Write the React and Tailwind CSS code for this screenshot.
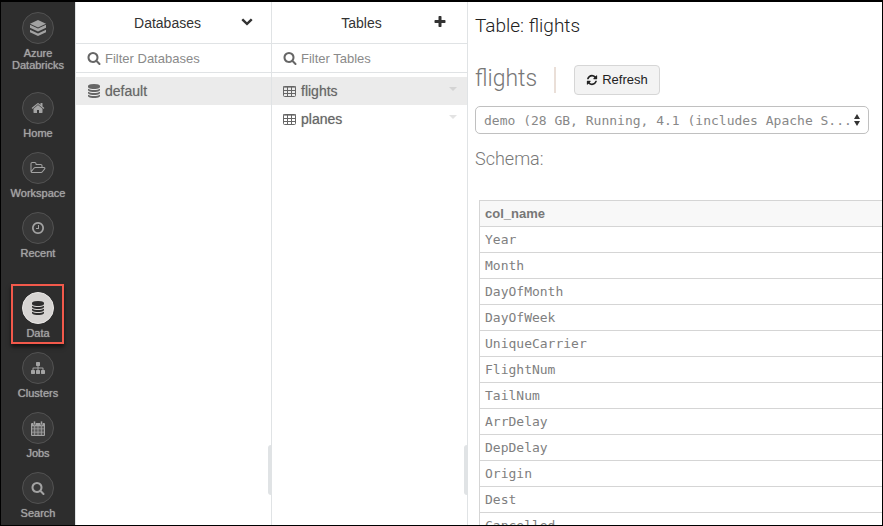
import React from "react";

const PATHS = {
  search:
    "M1216 832q0-185-131.5-316.5t-316.5-131.5-316.5 131.5-131.5 316.5 131.5 316.5 316.5 131.5 316.5-131.5 131.5-316.5zm512 832q0 52-38 90t-90 38q-54 0-90-38l-343-342q-179 124-399 124-143 0-273.5-55.5t-225-150-150-225-55.5-273.5 55.5-273.5 150-225 225-150 273.5-55.5 273.5 55.5 225 150 150 225 55.5 273.5q0 220-124 399l343 343q37 37 37 90z",
  home: "M1472 992v480q0 26-19 45t-45 19h-384v-384h-256v384h-384q-26 0-45-19t-19-45v-480q0-1 .5-3t.5-3l575-474 575 474q1 2 1 6zm223-69l-62 74q-8 9-21 11h-3q-13 0-21-7l-692-577-692 577q-12 8-24 7-13-2-21-11l-62-74q-8-10-7-23.5t11-21.5l719-599q32-26 76-26t76 26l244 204v-195q0-14 9-23t23-9h192q14 0 23 9t9 23v408l219 182q10 8 11 21.5t-7 23.5z",
  plus: "M1600 736v192q0 40-28 68t-68 28h-416v416q0 40-28 68t-68 28h-192q-40 0-68-28t-28-68v-416h-416q-40 0-68-28t-28-68v-192q0-40 28-68t68-28h416v-416q0-40 28-68t68-28h192q40 0 68 28t28 68v416h416q40 0 68 28t28 68z",
  refresh:
    "M1639 1056q0 5-1 7-64 268-268 434.5t-478 166.5q-146 0-282.5-55t-243.5-157l-129 129q-19 19-45 19t-45-19-19-45v-448q0-26 19-45t45-19h448q26 0 45 19t19 45-19 45l-137 137q71 66 161 102t187 36q134 0 250-65t186-179q11-17 53-117 8-23 30-23h192q13 0 22.5 9.5t9.5 22.5zm25-800v448q0 26-19 45t-45 19h-448q-26 0-45-19t-19-45 19-45l138-138q-148-137-349-137-134 0-250 65t-186 179q-11 17-53 117-8 23-30 23h-199q-13 0-22.5-9.5t-9.5-22.5v-7q65-268 270-434.5t480-166.5q146 0 284 55.5t245 156.5l130-129q19-19 45-19t45 19 19 45z",
  sitemap:
    "M1792 1248v320q0 40-28 68t-68 28h-320q-40 0-68-28t-28-68v-320q0-40 28-68t68-28h96v-192h-512v192h96q40 0 68 28t28 68v320q0 40-28 68t-68 28h-320q-40 0-68-28t-28-68v-320q0-40 28-68t68-28h96v-192h-512v192h96q40 0 68 28t28 68v320q0 40-28 68t-68 28h-320q-40 0-68-28t-28-68v-320q0-40 28-68t68-28h96v-192q0-52 38-90t90-38h512v-192h-96q-40 0-68-28t-28-68v-320q0-40 28-68t68-28h320q40 0 68 28t28 68v320q0 40-28 68t-68 28h-96v192h512q52 0 90 38t38 90v192h96q40 0 68 28t28 68z",
  clock:
    "M1024 544v448q0 14-9 23t-23 9h-320q-14 0-23-9t-9-23v-64q0-14 9-23t23-9h224v-352q0-14 9-23t23-9h64q14 0 23 9t9 23zm416 352q0-148-73-273t-198-198-273-73-273 73-198 198-73 273 73 273 198 198 273 73 273-73 198-198 73-273zm224 0q0 209-103 385.5t-279.5 279.5-385.5 103-385.5-103-279.5-279.5-103-385.5 103-385.5 279.5-279.5 385.5-103 385.5 103 279.5 279.5 103 385.5z",
  database:
    "M896 768q237 0 443-43t325-127v170q0 69-103 128t-280 93.5-385 34.5-385-34.5-280-93.5-103-128v-170q119 84 325 127t443 43zm0 768q237 0 443-43t325-127v170q0 69-103 128t-280 93.5-385 34.5-385-34.5-280-93.5-103-128v-170q119 84 325 127t443 43zm0-384q237 0 443-43t325-127v170q0 69-103 128t-280 93.5-385 34.5-385-34.5-280-93.5-103-128v-170q119 84 325 127t443 43zm0-1152q208 0 385 34.5t280 93.5 103 128v128q0 69-103 128t-280 93.5-385 34.5-385-34.5-280-93.5-103-128v-128q0-69 103-128t280-93.5 385-34.5z",
  folder:
    "M1845 931q0-35-53-35h-1088q-40 0-85.5 21.5t-71.5 52.5l-294 363q-18 24-18 40 0 35 53 35h1088q40 0 86-22t71-53l294-363q18-22 18-39zm-1141-163h768v-160q0-40-28-68t-68-28h-576q-40 0-68-28t-28-68v-64q0-40-28-68t-68-28h-320q-40 0-68 28t-28 68v853l256-315q44-53 116-87.5t140-34.5zm1269 163q0 62-46 120l-295 363q-43 53-116 87.5t-140 34.5h-1088q-92 0-158-66t-66-158v-960q0-92 66-158t158-66h320q92 0 158 66t66 158v32h544q92 0 158 66t66 158v160h192q54 0 99 24.5t67 70.5q15 32 15 68z",
  chevron:
    "M1683 808l-742 741q-19 19-45 19t-45-19l-742-741q-19-19-19-45.5t19-45.5l166-165q19-19 45-19t45 19l531 531 531-531q19-19 45-19t45 19l166 165q19 19 19 45.5t-19 45.5z",
};

function Icon({ name, className, viewBox = "0 0 1792 1792" }) {
  return (
    <svg viewBox={viewBox} className={className} fill="currentColor" aria-hidden="true">
      <path d={PATHS[name]} />
    </svg>
  );
}

function LogoIcon() {
  return (
    <svg viewBox="0 0 18 18" className="size-[18px]" fill="currentColor" aria-hidden="true">
      <path d="M9 1 17 4.800 9 8.600 1 4.800z" />
      <path d="M1 5.800 9 9.600 17 5.800V8.800L9 12.600 1 8.800z" />
      <path d="M1 10.800 9 14.600 17 10.800V13.200L9 17 1 13.200z" />
    </svg>
  );
}

function CalendarIcon() {
  return (
    <svg viewBox="0 0 14 15" className="h-[15px] w-[14px]" aria-hidden="true">
      <path fill="currentColor" d="M1 2h12a1 1 0 0 1 1 1v11a1 1 0 0 1-1 1H1a1 1 0 0 1-1-1V3a1 1 0 0 1 1-1z" />
      <rect x="2.5" y="0" width="2" height="4" rx="1" fill="currentColor" stroke="#383838" strokeWidth=".5" />
      <rect x="9.500" y="0" width="2" height="4" rx="1" fill="currentColor" stroke="#383838" strokeWidth=".5" />
      <path
        fill="#5a5a5a"
        d="M1 5.200h2.300v2.300H1zM4.100 5.200h2.500v2.300H4.100zM7.400 5.200h2.500v2.300H7.400zM10.700 5.200H13v2.300h-2.300zM1 8.300h2.300v2.500H1zM4.100 8.300h2.500v2.500H4.100zM7.400 8.300h2.500v2.500H7.400zM10.700 8.300H13v2.500h-2.300zM1 11.600h2.300V14H1zM4.100 11.600h2.500V14H4.100zM7.400 11.600h2.500V14H7.400zM10.700 11.600H13V14h-2.300z"
      />
    </svg>
  );
}

function TableIcon() {
  return (
    <svg viewBox="0 0 13 11" className="mr-px h-[11px] w-[13px] shrink-0" fill="none" stroke="currentColor" aria-hidden="true">
      <rect x=".5" y=".5" width="12" height="10" rx="1" />
      <path d="M0 1h13" strokeWidth="1.200" />
      <path d="M0 4.500h13M0 7.500h13M4.500 1v10M8.500 1v10" />
    </svg>
  );
}

const NAV = [
  { label: "Azure Databricks", icon: <LogoIcon />, gap: "mb-[21px]" },
  { label: "Home", icon: <Icon name="home" className="size-[14px]" />, gap: "mb-[13px]" },
  {
    label: "Workspace",
    icon: <Icon name="folder" viewBox="0 0 2048 1792" className="h-[14px] w-4" />,
    gap: "mb-[13px]",
  },
  { label: "Recent", icon: <Icon name="clock" className="size-[14px]" />, gap: "mb-[33px]" },
  { label: "Data", icon: <Icon name="database" className="size-[14px]" />, gap: "mb-[13px]", active: true },
  { label: "Clusters", icon: <Icon name="sitemap" className="size-[14px]" />, gap: "mb-[13px]" },
  { label: "Jobs", icon: <CalendarIcon />, gap: "mb-[13px]" },
  { label: "Search", icon: <Icon name="search" className="size-[14px]" />, gap: "" },
];

function Sidebar() {
  return (
    <nav className="w-[74px] shrink-0 bg-[#2d2d2d] pt-[10px]">
      {NAV.map(({ label, icon, gap, active }) => (
        <a
          key={label}
          href="#"
          className={`relative flex flex-col items-center text-center text-[11px] leading-3 text-[#a3a3a3] [text-shadow:0_0_1px_currentColor] ${gap}`}
        >
          {active && (
            <span className="absolute -top-2 left-[10px] h-[60px] w-[53px] border-2 border-[#f2594b] shadow-[0_3px_4px_rgba(0,0,0,0.6)]" />
          )}
          <span
            className={`relative mb-[3px] flex size-8 items-center justify-center rounded-full border ${
              active ? "border-[#ebe9e7] bg-[#d6d4d2] text-[#2d2d2d]" : "border-[#525252] bg-[#383838] text-[#a3a3a3]"
            }`}
          >
            {icon}
          </span>
          <span className="relative w-16">{label}</span>
        </a>
      ))}
    </nav>
  );
}

function Panel({ title, action, placeholder, className, children }) {
  return (
    <section className={`relative flex shrink-0 flex-col border-r border-[#e0e3e5] ${className}`}>
      <header className="flex h-[42px] items-center border-b border-[#e0e3e5] px-[18px]">
        <h2 className="flex-1 text-center text-sm text-[#333]">{title}</h2>
        {action}
      </header>
      <label className="flex h-[29px] items-center gap-1 border-b border-[#e0e3e5] pl-[11px] text-[#666]">
        <Icon name="search" className="size-[14px] shrink-0" />
        <input
          type="text"
          aria-label={placeholder}
          placeholder={placeholder}
          className="w-full min-w-0 bg-transparent pt-[2px] text-[13px] outline-none placeholder:text-[#8a8a8a]"
        />
      </label>
      <ul className="pt-1 text-sm text-[#666] [text-shadow:0_0_1px_#aaa]">{children}</ul>
      <span className="absolute right-0 bottom-[30px] h-[50px] w-[3px] rounded-l bg-[#e0e3e5]" />
    </section>
  );
}

function PanelRow({ icon, label, active, menu }) {
  return (
    <li className={`flex h-7 items-center pl-[11px] ${active ? "bg-[#ebebeb]" : ""}`}>
      {icon}
      <a href="#" className="ml-1 flex-1">
        {label}
      </a>
      {menu && (
        <button type="button" aria-label={`${label} menu`} className="mr-[10px] pb-1">
          <svg viewBox="0 0 8 4" className="h-1 w-2" fill={active ? "#d4d4d4" : "#e3e3e3"} aria-hidden="true">
            <path d="M0 0h8L4 4z" />
          </svg>
        </button>
      )}
    </li>
  );
}

const COLUMNS = [
  "Year",
  "Month",
  "DayOfMonth",
  "DayOfWeek",
  "UniqueCarrier",
  "FlightNum",
  "TailNum",
  "ArrDelay",
  "DepDelay",
  "Origin",
  "Dest",
  "Cancelled",
];

export default function App() {
  return (
    <div className="flex h-screen overflow-hidden border border-t-2 border-black bg-white font-['Liberation_Sans',Arial,sans-serif]">
      <Sidebar />

      <Panel
        title="Databases"
        placeholder="Filter Databases"
        className="w-[197px] border-l"
        action={
          <button type="button" aria-label="Collapse databases" className="pb-1">
            <Icon name="chevron" className="size-3 text-[#333]" />
          </button>
        }
      >
        <PanelRow icon={<Icon name="database" className="size-[14px] shrink-0" />} label="default" active />
      </Panel>

      <Panel
        title="Tables"
        placeholder="Filter Tables"
        className="w-[196px]"
        action={
          <button type="button" aria-label="Add table" className="mr-[2px] pb-[2px]">
            <Icon name="plus" className="size-[14px] text-[#333]" />
          </button>
        }
      >
        <PanelRow icon={<TableIcon />} label="flights" active menu />
        <PanelRow icon={<TableIcon />} label="planes" menu />
      </Panel>

      <main className="min-w-0 flex-1 pl-[7px]">
        <h1 className="pt-3 font-[Roboto,sans-serif] text-[19px] leading-6 font-light text-[#222]">Table: flights</h1>

        <div className="mt-[27px] flex h-[30px] items-center">
          <h2 className="mb-[2px] font-[Roboto,sans-serif] text-[23px] leading-[30px] font-light text-[#777]">
            flights
          </h2>
          <span className="mr-[18px] ml-[17px] h-[26px] w-[2px] bg-[#eadfd8]" />
          <button
            type="button"
            className="flex h-[30px] items-center gap-1 rounded border border-[#d6d6d6] bg-[#f3f3f3] px-[11px] text-[13px] text-[#222]"
          >
            <Icon name="refresh" className="size-3" />
            Refresh
          </button>
        </div>

        <div className="relative mt-[11px] mr-[13px]">
          <select
            aria-label="Cluster"
            className="block h-7 w-full appearance-none rounded-[5px] border border-[#c0c0c0] bg-white pt-[2px] pr-4 pl-2 font-['DejaVu_Sans_Mono',monospace] text-[13px] text-[#888]"
          >
            <option>demo (28 GB, Running, 4.1 (includes Apache S...</option>
          </select>
          <svg
            viewBox="0 0 6 12"
            className="pointer-events-none absolute top-2 right-[9px] h-3 w-[6px]"
            fill="#333"
            aria-hidden="true"
          >
            <path d="M0 5h6L3 0zM0 7h6L3 12z" />
          </svg>
        </div>

        <h3 className="mt-[13px] font-[Roboto,sans-serif] text-[18px] leading-6 font-light text-[#777]">Schema:</h3>

        <div className="mt-[29px] pl-1">
          <table className="w-full border-collapse border border-r-0 border-[#d5d5d5] text-left text-[13px] leading-[25px] text-[#777]">
            <thead className="bg-[#f8f8f8]">
              <tr className="border-b border-[#d5d5d5]">
                <th className="px-[5px] font-bold">col_name</th>
              </tr>
            </thead>
            <tbody className="font-['DejaVu_Sans_Mono',monospace] text-[#808080]">
              {COLUMNS.map((name) => (
                <tr key={name} className="border-b border-[#d5d5d5]">
                  <td className="px-[5px] pt-px leading-6">{name}</td>
                </tr>
              ))}
            </tbody>
          </table>
        </div>
      </main>
    </div>
  );
}
